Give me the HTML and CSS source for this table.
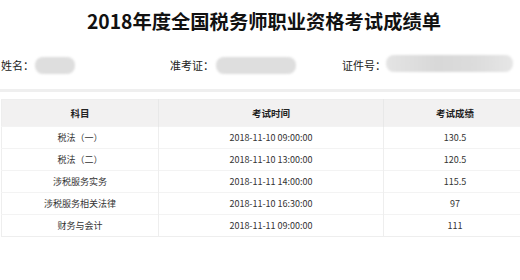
FILE: index.html
```html
<!DOCTYPE html>
<html lang="zh-CN">
<head>
<meta charset="utf-8">
<title>成绩单</title>
<link rel="stylesheet" href="styles.css">
</head>
<body>
<div class="page">
  <h1 class="title">2018年度全国税务师职业资格考试成绩单</h1>
  <div class="info">
    <div class="info-item"><span class="label">姓名：</span><span class="mask mask-name"></span></div>
    <div class="info-item"><span class="label">准考证：</span><span class="mask mask-exam"></span></div>
    <div class="info-item"><span class="label">证件号：</span><span class="mask mask-id"></span></div>
  </div>
  <div class="divider"></div>
  <table class="scores">
    <colgroup>
      <col class="c1"><col class="c2"><col class="c3">
    </colgroup>
    <thead>
      <tr><th>科目</th><th>考试时间</th><th>考试成绩</th></tr>
    </thead>
    <tbody>
      <tr><td>税法（一）</td><td>2018-11-10 09:00:00</td><td>130.5</td></tr>
      <tr><td>税法（二）</td><td>2018-11-10 13:00:00</td><td>120.5</td></tr>
      <tr><td>涉税服务实务</td><td>2018-11-11 14:00:00</td><td>115.5</td></tr>
      <tr><td>涉税服务相关法律</td><td>2018-11-10 16:30:00</td><td>97</td></tr>
      <tr><td>财务与会计</td><td>2018-11-11 09:00:00</td><td>111</td></tr>
    </tbody>
  </table>
</div>
</body>
</html>
```
FILE: styles.css
```css
html, body {
  margin: 0;
  padding: 0;
  overflow: hidden;
  background: #fff;
}
body {
  font-family: "Noto Sans CJK SC", "Noto Sans", sans-serif;
  color: #333;
}
.page {
  width: 526px;
  padding-left: 1px;
}
.title {
  margin: 0;
  padding-top: 9px;
  font-size: 19.3px;
  line-height: 24px;
  font-weight: 700;
  color: #111;
  text-align: center;
}
.info {
  display: grid;
  grid-template-columns: 169px 172px 1fr;
  margin-top: 22px;
  height: 20px;
  align-items: center;
}
.info-item {
  display: flex;
  align-items: center;
  font-size: 11px;
  line-height: 18px;
  color: #222;
}
.mask {
  display: inline-block;
  height: 17px;
  border-radius: 8px;
  background: #dedede;
  filter: blur(1.2px);
}
.mask-name { width: 40px; margin-left: 1px; }
.mask-exam { width: 80px; margin-left: 2px; }
.mask-id { width: 127px; margin-left: 0; margin-top: -3px; background: linear-gradient(90deg, #e4e4e4, #d8d8d8 40%, #dcdcdc 70%, #e6e6e6); }
.divider {
  height: 3px;
  background: #efefef;
  margin: 14px 0 0 -1px;
  width: 521px;
}
.scores {
  margin-top: 7px;
  width: 525px;
  border-collapse: collapse;
  table-layout: fixed;
  border: 1px solid #eeeeee;
}
.c1 { width: 157px; }
.c2 { width: 225px; }
.c3 { width: 143px; }
.scores th {
  height: 26px;
  padding: 0;
  background: #f2f1f1;
  font-size: 9.5px;
  font-weight: 700;
  color: #222;
  border-right: 1px solid #e8e8e8;
  text-align: center;
}
.scores td {
  height: 21px;
  padding: 0;
  font-size: 9px;
  color: #333;
  text-align: center;
  border-top: 1px solid #f3f3f3;
  border-right: 1px solid #eeeeee;
}
```
